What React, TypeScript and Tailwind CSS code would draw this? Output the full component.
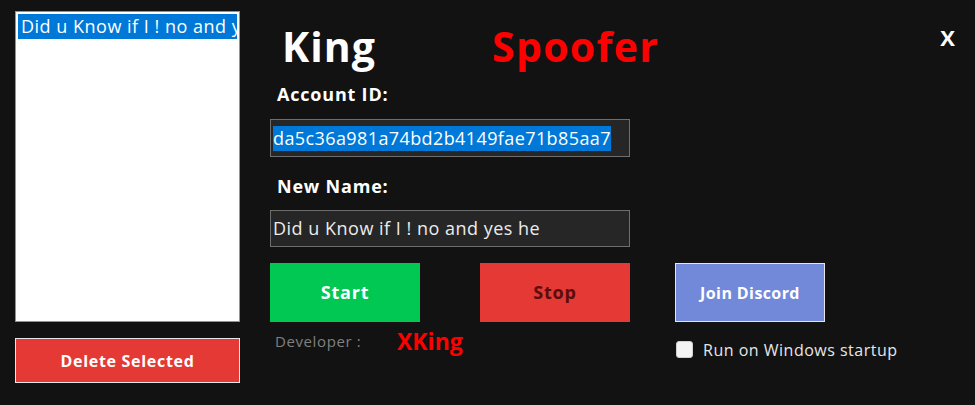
const font = "font-['Open_Sans','Noto_Sans',sans-serif]";

const App = () => {
  return (
    <div className={`w-[975px] h-[405px] bg-[#121212] flex ${font}`}>
      {/* Left list column */}
      <div className="w-[225px] ml-[15px] mt-[11px] flex flex-col">
        <div className="h-[311px] bg-white border border-[#8f949a] p-[2px]">
          <div className="h-[25px] bg-[#0078d7] text-white text-[18px] tracking-[0.5px] leading-[25px] pl-[3px] whitespace-nowrap overflow-hidden">
            Did u Know if I ! no and yes he
          </div>
        </div>
        <button className="mt-[16px] h-[45px] bg-[#e53935] border border-[#e6e6e6] text-white font-bold text-[16px] tracking-[0.7px]">
          Delete Selected
        </button>
      </div>

      {/* Right column */}
      <div className="flex-1 ml-[30px] flex flex-col relative">
        {/* Header */}
        <div className="flex mt-[26px] h-[40px] items-center">
          <div className="w-[222px] pl-[12px] text-white font-bold text-[41px] tracking-[1px] leading-none">King</div>
          <div className="text-[#ff0000] font-bold text-[41px] tracking-[1.3px] leading-none">Spoofer</div>
        </div>
        <button className="absolute top-[26px] right-[20px] text-white font-bold text-[22px] leading-none">
          X
        </button>

        {/* Account ID */}
        <div className="mt-[19px] ml-[7px] text-white font-bold text-[18px] tracking-[0.8px] leading-none">Account ID:</div>
        <div className="mt-[16px] w-[360px] h-[38px] bg-[#262626] border border-[#6e6e6e] flex items-center pl-[2px]">
          <span className="bg-[#0078d7] text-white text-[18px] tracking-[0.4px] leading-[25px] h-[25px]">
            da5c36a981a74bd2b4149fae71b85aa7
          </span>
        </div>

        {/* New Name */}
        <div className="mt-[20px] ml-[7px] text-white font-bold text-[18px] tracking-[0.8px] leading-none">New Name:</div>
        <div className="mt-[15px] w-[360px] h-[37px] bg-[#262626] border border-[#6e6e6e] flex items-center pl-[2px]">
          <span className="text-[#ececec] text-[18px] tracking-[0.5px] leading-[25px]">Did u Know if I ! no and yes he</span>
        </div>

        {/* Buttons */}
        <div className="mt-[16px] flex">
          <div className="w-[360px] flex flex-col">
            <div className="flex justify-between">
              <button className="w-[150px] h-[59px] bg-[#00c853] text-white font-bold text-[18px] tracking-[0.8px]">Start</button>
              <button className="w-[150px] h-[59px] bg-[#e53935] text-[#5a0c0c] font-bold text-[18px] tracking-[0.8px]">Stop</button>
            </div>
            <div className="flex items-center mt-[8px]">
              <span className="ml-[5px] w-[122px] text-[#808080] text-[15px] tracking-[0.6px]">Developer :</span>
              <span className="text-[#ff0000] font-bold text-[23px] leading-none">XKing</span>
            </div>
          </div>
          <div className="ml-[45px] flex flex-col">
            <button className="w-[150px] h-[59px] bg-[#7289da] border border-[#e6e6e6] text-white font-bold text-[16px] tracking-[0.4px]">
              Join Discord
            </button>
            <label className="mt-[19px] flex items-center">
              <span className="w-[17px] h-[17px] ml-[1px] bg-[#f4f4f4] rounded-[3px] border border-[#cfcfcf]" />
              <span className="ml-[10px] text-[#e6e6e6] text-[16px] tracking-[0.5px] leading-none">Run on Windows startup</span>
            </label>
          </div>
        </div>
      </div>
    </div>
  );
};

export default App;
